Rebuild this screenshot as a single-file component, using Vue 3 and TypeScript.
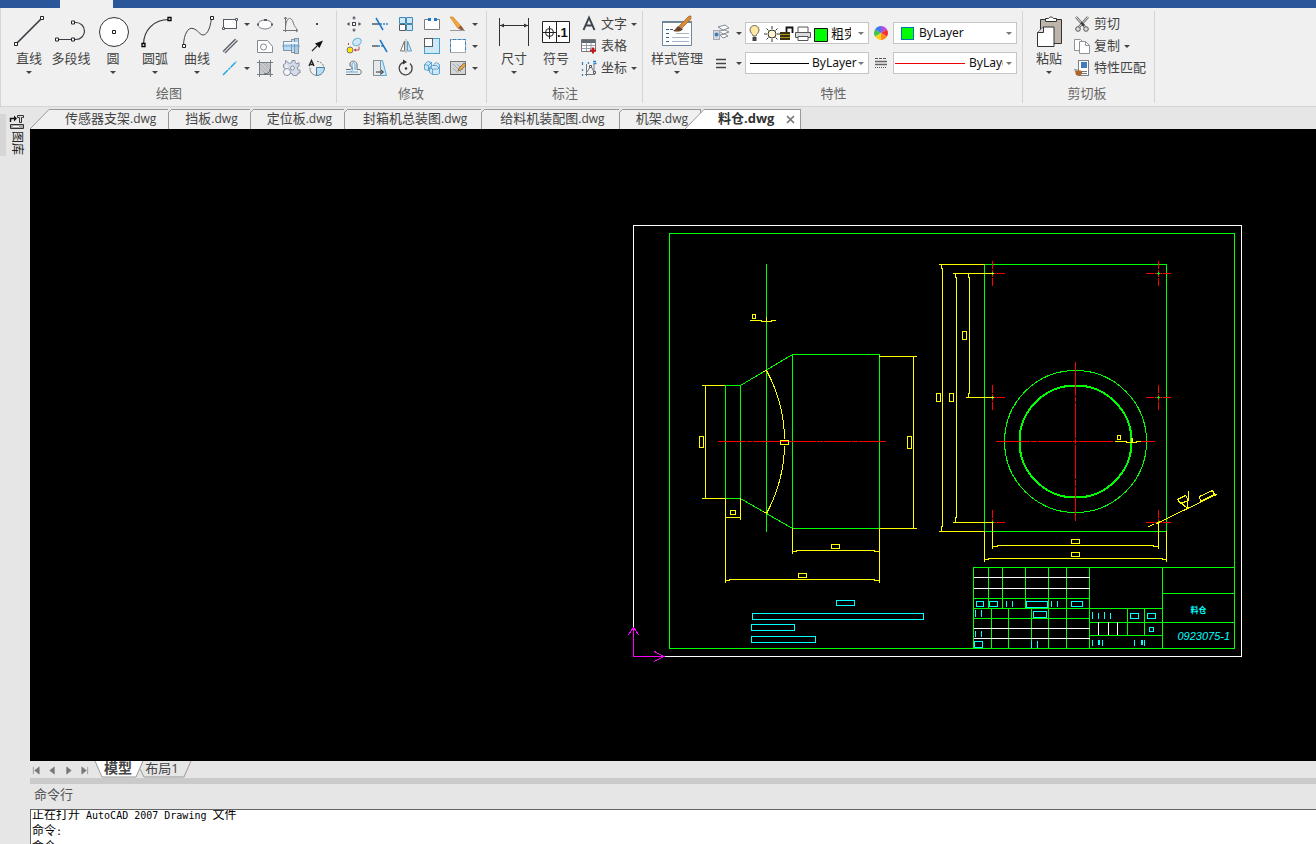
<script setup lang="ts">
import { ref } from 'vue'

interface Tool { id: string; label: string; caret?: boolean }

const g = '#555b63'
const b = '#2f86c8'
const f = '#cfe8f7'

const icons: Record<string, string> = {
  rect: `<rect x="5.500" y="6.500" width="13" height="9" fill="#fff" stroke="${g}"/><path d="M4.500 14.500h2v2h-2zM17.500 5.500h2v2h-2z" fill="#fff" stroke="${g}"/>`,
  ellipse: `<ellipse cx="12" cy="11.500" rx="7" ry="4.500" fill="#fff" stroke="#7a8087"/><path d="M11 6h3v2h-3zM4 10.500h2v2H4zM18 10.500h2v2h-2z" fill="${g}"/>`,
  spline: `<path d="M6.500 4v15M4 17.500h15M6.500 15C7 4 12 3 14 9s3 6 4 6.500M5 6l1.500-2L8 6M17 16l2 1.500-2 1.500" fill="none" stroke="#70767c"/>`,
  point: `<path d="M11 10h2v2h-2z" fill="#444"/>`,
  parallel: `<path d="M5 16.500 17.500 4M7 18 19.500 5.500" stroke="#5a6068" stroke-width="1.300"/><path d="M6 17.300 18.500 4.800" stroke="#c5c9cc"/>`,
  region: `<path d="M4.500 5.500h10l5 6v6h-15z" fill="#fff" stroke="#858b91"/><circle cx="10.500" cy="12" r="3" fill="#fff" stroke="#858b91"/>`,
  shaft: `<rect x="4.500" y="6.500" width="8" height="9" fill="#b9dcf2" stroke="#8795a3"/><rect x="12.500" y="4.500" width="3" height="13" fill="#b9dcf2" stroke="#8795a3"/><rect x="15.500" y="3.500" width="4" height="15" fill="#a9cdea" stroke="#8795a3"/><path d="M5 8h14" stroke="#eef6fb" stroke-width="2"/><path d="M3 11h18" stroke="#6fa5cf"/>`,
  arrow: `<path d="M7 16l5-5" stroke="#333" stroke-width="1.300"/><path d="M18 5.500 10 8.500l4.500 4.500z" fill="#111"/>`,
  cline: `<path d="M5 18 18.500 4.500" stroke="#27a4df" stroke-width="1.500" stroke-dasharray="7 .8 2 .8"/>`,
  hatch: `<rect x="6.500" y="5.500" width="11" height="12" fill="#c6cacd" stroke="#666c72"/><path d="M4 5.500h16M4 17.500h16M6.500 3v17M17.500 3v17" stroke="#777d83"/><path d="M7 7l10 10M7 11l6 6M10 6l7 7M13 6l4 4" stroke="#a4a9ae" stroke-width=".8"/><path d="M17 12c0 4-3 5-6 5" fill="none" stroke="#555"/>`,
  gear: `<path d="M6.500 3.500l4 3 2.500-1v-2h3v2l2 1.500 2-1.500v4l-2 1 1 2.500h2v3h-2l-1 2.500h-4l-1-2h-2M6.500 3.500v3l-2 1v3l2 1" fill="#d5dded" stroke="#8993a1"/><circle cx="8" cy="15" r="3.500" fill="#f4f6fa" stroke="#8993a1"/><circle cx="13.500" cy="11" r="2" fill="#f0f0f0" stroke="#8993a1"/>`,
  pie: `<path d="M12 4.500a7 7 0 0 1 7 6" fill="none" stroke="#777" stroke-dasharray="2 1"/><path d="M5 10.500a7 7 0 0 0 7 8" fill="none" stroke="#8a8f94"/><path d="M11.500 10.500h8c0 4-3 8-8 8z" fill="#b5e0f7" stroke="#4d7c98"/><path d="M4 9l2.500-5.500L9 9M5 7.500h3" fill="none" stroke="#222" stroke-width="1.400"/>`,
  move: `<path d="M10.500 9.500h3v3h-3z" fill="#fff" stroke="#30363c"/><path d="M12 4v3M12 15v3M5 11h3M16 11h3" stroke="#8a8f94"/><path d="M12 3 10 5.500h4zM12 19l-2-2.500h4zM5 11l2.500-2v4zM19 11l-2.500-2v4z" fill="${g}"/>`,
  trim: `<path d="M4 11h7" stroke="${g}" stroke-width="1.500"/><path d="M12 11h8" stroke="${b}" stroke-dasharray="2 1" stroke-width="1.500"/><path d="M8 5l7 12" stroke="#1f78c4" stroke-width="1.500"/>`,
  array: `<path d="M5.500 4.500h6v6h-6zM12.500 4.500h6v6h-6zM12.500 11.500h6v6h-6z" fill="${f}" stroke="#4089b5"/><path d="M5.500 11.500h6v6h-6z" fill="#fff" stroke="${g}"/>`,
  break: `<path d="M9 6.500H4.500v10h15v-10H15" fill="#fff" stroke="#777d83"/><path d="M8 5h3v3H8zM14 5h3v3h-3z" fill="#1f78c4"/>`,
  pencil: `<path d="M4 4l3 0 8 9-3 2.500z" fill="#f3a43a" stroke="#cf8526" stroke-width=".7"/><path d="M12 15l3-2.500 3 4-2 1.500z" fill="#8d5d42"/><path d="M4 17.500h15" stroke="#999"/>`,
  copy: `<ellipse cx="15" cy="7" rx="4.500" ry="3.500" transform="rotate(-35 15 7)" fill="${f}" stroke="#59a9d8"/><circle cx="8" cy="15" r="3" fill="#ffe600" stroke="#777"/><path d="M6.500 8v2M17 11.500v3.500h-3" fill="none" stroke="#b84949"/><path d="M14 13.500l-2.500 1.500 2.500 1.500z" fill="#c33"/>`,
  extend: `<path d="M4 11h6" stroke="${g}" stroke-width="1.500"/><path d="M10 11h5" stroke="${b}" stroke-dasharray="2 1" stroke-width="1.500"/><path d="M12 5l7 12" stroke="#1f78c4" stroke-width="1.500"/>`,
  mirror: `<path d="M10.500 6v10H6.500z" fill="#fff" stroke="#777"/><path d="M13.500 6v10h4z" fill="${f}" stroke="#5a9fc7"/><path d="M12 4v14" stroke="#aaa"/>`,
  scale: `<rect x="4.500" y="3.500" width="15" height="15" fill="${f}" stroke="#4b9fd0"/><rect x="4.500" y="3.500" width="8" height="8" fill="#fff" stroke="${g}"/>`,
  select: `<rect x="4.500" y="4.500" width="15" height="13" fill="#fff" stroke="#aaa"/><path d="M4.500 17V4.500h15V17" fill="none" stroke="${b}" stroke-dasharray="3 2"/>`,
  offset: `<path d="M4 17.500h13c3 0 3-5 0-5h-2V8c0-5-7-5-7-1v2c2 0 3 3 0 3.500H4" fill="none" stroke="#666d75"/><path d="M4 15h12M13 13V8c0-3-3-3-3-1v3c1 1 1 3-1 5" fill="none" stroke="#59a9d8"/>`,
  stretch: `<path d="M5.500 3.500h9l4 15h-13z" fill="${f}" stroke="#59a9d8"/><path d="M5.500 3.500h7v15h-7z" fill="#e6e9ec" stroke="#8a8f94"/><path d="M8 15h7M13 13l2.500 2-2.500 2" fill="none" stroke="#333"/>`,
  rotate: `<path d="M10 5a6.500 6.500 0 1 0 6 1.500" fill="none" stroke="#444" stroke-width="1.300"/><path d="M9 2.500v5l4-2.500z" fill="#333"/><circle cx="12" cy="11.500" r="1.200" fill="#333"/>`,
  array3d: `<path d="M4.500 7.500l3-3 4 1v5l-3 3-4-1zM4.500 7.500l4 1v5M8.500 8.500l3-3M13.500 7.500l3-2 3 2v4M9.500 10.500l3-2h4l3 3v5l-2 1h-5l-3-2zM9.500 10.500l3 1.500h5l2-1M12.500 12v5.500" fill="${f}" stroke="#4f9dcb" stroke-width=".9"/>`,
  hatchedit: `<rect x="4.500" y="4.500" width="15" height="13" fill="#d3d6d8" stroke="#777"/><path d="M7 7l8 8M7 11l5 5M11 7l6 6" stroke="#a6abb0"/><path d="M12 14l1-3 5-5 2 2-5 5z" fill="#e5a44c" stroke="#75583a" stroke-width=".7"/><path d="M4 17.500h16" stroke="#555"/>`,
  text: `<path d="M6.500 17 12 4.500 17.500 17M8.500 12.500h7" fill="none" stroke="#41464d" stroke-width="1.900"/>`,
  table: `<path d="M4.500 4.500h14v12h-14z" fill="#fff" stroke="#777"/><path d="M5 5h13v3H5z" fill="#626970"/><path d="M5 10.500h13M5 13.500h13M9.500 8v8M14 8v8" stroke="#9aa0a6"/><path d="M13 15.500h6M16 12.500v6" stroke="#c4161c" stroke-width="2"/>`,
  coord: `<path d="M8 17.500h10M9.500 7v12M10 15l4-6 3 6V7" fill="none" stroke="#737980"/><path d="M5.500 5v3M5.500 12v2M5.500 17v2M11.500 5v2M16 4.500h3M16.500 6.500h3" stroke="${b}" stroke-width="1.300"/><path d="M12.500 8.500h2v2h-2zM16.500 14.500h2v2h-2z" fill="#fff" stroke="${g}"/>`,
  layers: `<path d="M9 5l7-2 4 3-6 2zM10 9l6-1 4 2-6 2zM11 13l5-1 3 2-5 2z" fill="#fff" stroke="#858b91"/><rect x="4.500" y="8.500" width="6" height="9" fill="#d3dae1" stroke="#a5abb1"/><circle cx="7.500" cy="12.500" r="2" fill="#3c7db3"/>`,
  weight: `<path d="M7 7.500h10M7 11.500h10M7 15.500h10" stroke="#444" stroke-width="1.400"/>`,
  cut: `<path d="M6 4l9 10M18 4 9 14" stroke="#666" stroke-width="2.600"/><path d="M6 4l9 10M18 4 9 14" stroke="#eee"/><path d="M11 9.500l3 3" stroke="#333" stroke-width="2"/><circle cx="8" cy="16" r="2.300" fill="#ddd" stroke="#555"/><circle cx="16" cy="16" r="2.300" fill="#ddd" stroke="#555"/>`,
  copydoc: `<path d="M4.500 4.500h6l3 3v8h-9z" fill="#fff" stroke="#8f9398"/><path d="M9.500 6.500h6l4 4v8h-10z" fill="#fff" stroke="#8f9398"/><path d="M15.500 6.500v4h4" fill="none" stroke="#8f9398"/>`,
  match: `<rect x="8.500" y="3.500" width="10" height="15" fill="#fff" stroke="#7b7f84"/><rect x="11" y="5" width="6" height="6" fill="#3f7dba"/><path d="M12 14.500h5M12 16.500h5" stroke="#777"/><path d="M5 14l3-1 4 1 0 3-3 2-3-1z" fill="#b06329"/><path d="M4 12.500l4 1" stroke="#999" stroke-width="1.500"/>`,
}

const bigIcons: Record<string, string> = {
  line: `<path d="M3 29 29 3" stroke="#3a3f46" stroke-width="1.700"/><path d="M1.500 27.500h3v3h-3zM27.500 1.500h3v3h-3z" fill="#fff" stroke="#222"/>`,
  pline: `<path d="M2 24.500h16M18 7.500h3a8.500 8.500 0 0 1 0 17h-3" fill="none" stroke="#3a3f46" stroke-width="1.200"/><path d="M.5 23h3v3h-3zM16.500 23h3v3h-3zM16.500 6h3v3h-3z" fill="#fff" stroke="#222"/>`,
  circle: `<circle cx="17" cy="17" r="14.500" fill="#fff" stroke="#333"/><path d="M15.500 15.500h3v3h-3z" fill="#fff" stroke="#222"/>`,
  arc: `<path d="M4.500 29.500C4.500 15 15 4.500 30 4.500" fill="none" stroke="#333" stroke-width="1.200"/><path d="M3 28.500h3v3H3zM29 2.500h3v3h-3z" fill="#fff" stroke="#000" stroke-width="1.300"/>`,
  curve: `<path d="M2.500 30C3 19 7 12 12 13.500S19 20 22 20s7-4 8.500-17" fill="none" stroke="#444"/><path d="M1.500 29.500h3v3h-3zM29.500 1.500h3v3h-3z" fill="#fff" stroke="#222"/>`,
  dim: `<path d="M1.500 3v28M30.500 3v28" stroke="#333"/><path d="M2 10.500h28" stroke="#333"/><path d="M2 10.500l4-2v4zM30 10.500l-4-2v4z" fill="#333"/>`,
  symbol: `<path d="M2.500 6.500h27v21h-27zM16.500 6.500v21" fill="#fff" stroke="#222"/><circle cx="9.500" cy="17.500" r="4" fill="none" stroke="#222"/><path d="M3 17.500h13M9.500 11v13" stroke="#222"/><text x="17" y="22" font-size="13" font-weight="700" font-family="Liberation Sans, sans-serif" fill="#111">.1</text>`,
  style: `<path d="M1.500 6.500h29v24h-29z" fill="#fff" stroke="#6d879d"/><path d="M1 6h30v2H1z" fill="#6d879d"/><path d="M5 14.500h8M5 18.500h4M5 22.500h4M5 26.500h4" stroke="#355d87" stroke-dasharray="3 1"/><path d="M15 18.500h13M11 22.500h17M11 26.500h17" stroke="#a7b7c9"/><path d="M18 11 28 1l2 0v3L21 13z" fill="#d98a35" stroke="#8c5524" stroke-width=".6"/><path d="M17 11l5 3c-2 3-6 3-10 2 2-1 3-3 5-5z" fill="#6a442b"/>`,
  paste: `<path d="M7.500 4.500h21v24h-21z" fill="#bdb5aa" stroke="#333"/><path d="M12.500 6.500v-3h3c1-2 4-2 5 0h3v3z" fill="#fff" stroke="#333"/><path d="M4.500 17.500l6-5.500H21v19.500H4.500z" fill="#fff" stroke="#333"/><path d="M10.500 12v5.500h-6" fill="#ddd" stroke="#333"/>`,
}

const drawBig: Tool[] = [
  { id: 'line', label: '直线', caret: true },
  { id: 'pline', label: '多段线' },
  { id: 'circle', label: '圆', caret: true },
  { id: 'arc', label: '圆弧', caret: true },
  { id: 'curve', label: '曲线', caret: true },
]
const drawSmall: Tool[] = [
  { id: 'rect', label: '矩形', caret: true }, { id: 'ellipse', label: '椭圆' }, { id: 'spline', label: '公式曲线' }, { id: 'point', label: '点' },
  { id: 'parallel', label: '平行线' }, { id: 'region', label: '局部放大' }, { id: 'shaft', label: '孔轴' }, { id: 'arrow', label: '箭头' },
  { id: 'cline', label: '中心线', caret: true }, { id: 'hatch', label: '剖面线' }, { id: 'gear', label: '齿形' }, { id: 'pie', label: '圆弧拟合' },
]
const editSmall: Tool[] = [
  { id: 'move', label: '平移' }, { id: 'trim', label: '裁剪' }, { id: 'array', label: '阵列' }, { id: 'break', label: '打断' }, { id: 'pencil', label: '删除', caret: true },
  { id: 'copy', label: '平移复制' }, { id: 'extend', label: '延伸' }, { id: 'mirror', label: '镜像' }, { id: 'scale', label: '缩放' }, { id: 'select', label: '分解', caret: true },
  { id: 'offset', label: '等距线' }, { id: 'stretch', label: '拉伸' }, { id: 'rotate', label: '旋转' }, { id: 'array3d', label: '三维旋转' }, { id: 'hatchedit', label: '填充编辑', caret: true },
]
const noteBig: Tool[] = [
  { id: 'dim', label: '尺寸', caret: true },
  { id: 'symbol', label: '符号', caret: true },
]
const noteRows: Tool[] = [
  { id: 'text', label: '文字', caret: true },
  { id: 'table', label: '表格' },
  { id: 'coord', label: '坐标', caret: true },
]
const clipRows: Tool[] = [
  { id: 'cut', label: '剪切' },
  { id: 'copydoc', label: '复制', caret: true },
  { id: 'match', label: '特性匹配' },
]

const files = ['传感器支架', '挡板', '定位板', '封箱机总装图', '给料机装配图', '机架']
const active = ref('料仓.dwg')

const navs = [
  { label: '第一页', d: 'M1.500 1v8M8 1v8L3 5z' },
  { label: '上一页', d: 'M7 1v8L2 5z' },
  { label: '下一页', d: 'M3 1v8l5-4z' },
  { label: '最后一页', d: 'M2 1v8l5-4zM8.500 1v8' },
]

const holes = [[992, 273], [1158, 273], [992, 397], [1158, 397], [992, 522], [1158, 522]]

type Box = [number, number, number, number]
const dimBoxes: Box[] = [
  [752, 314, 3, 4], [699, 436, 4, 11], [907, 436, 4, 12], [730, 510, 5, 4], [798, 573, 8, 4], [831, 544, 8, 4], [780, 440, 8, 4],
  [936, 393, 4, 8], [949, 393, 4, 8], [962, 331, 4, 8], [1071, 539, 8, 4], [1071, 552, 8, 4], [1117, 435, 3, 4],
]
const textBoxes: Box[] = [
  [836, 600, 18, 5], [752, 613, 171, 6], [751, 624, 43, 6], [751, 636, 64, 6],
  [976, 601, 7, 5], [989, 601, 8, 5], [1026, 601, 21, 6], [1071, 601, 11, 5], [1033, 611, 13, 6],
  [1130, 613, 8, 5], [1147, 613, 8, 5], [1149, 627, 4, 4], [974, 641, 8, 6],
]
</script>

<template>
  <div class="app">
    <div class="titlebar"><span class="menu-tab"></span></div>

    <header class="ribbon">
      <section class="group">
        <div class="tools">
          <button v-for="t in drawBig" :key="t.id" class="big">
            <svg width="33" height="33" viewBox="0 0 33 33" aria-hidden="true" v-html="bigIcons[t.id]"></svg>
            <span>{{ t.label }}</span>
            <i v-if="t.caret" class="caret"></i>
          </button>
          <div class="grid draw">
            <button v-for="t in drawSmall" :key="t.id" class="small" :aria-label="t.label">
              <svg width="24" height="22" viewBox="0 0 24 22" aria-hidden="true" v-html="icons[t.id]"></svg>
              <i v-if="t.caret" class="caret"></i>
            </button>
          </div>
        </div>
        <h2>绘图</h2>
      </section>

      <section class="group edit">
        <div class="tools">
          <div class="grid modify">
            <button v-for="t in editSmall" :key="t.id" class="small" :aria-label="t.label">
              <svg width="24" height="22" viewBox="0 0 24 22" aria-hidden="true" v-html="icons[t.id]"></svg>
              <i v-if="t.caret" class="caret"></i>
            </button>
          </div>
        </div>
        <h2>修改</h2>
      </section>

      <section class="group note">
        <div class="tools">
          <button v-for="t in noteBig" :key="t.id" class="big">
            <svg width="33" height="33" viewBox="0 0 33 33" aria-hidden="true" v-html="bigIcons[t.id]"></svg>
            <span>{{ t.label }}</span>
            <i class="caret"></i>
          </button>
          <div class="rows">
            <button v-for="t in noteRows" :key="t.id" class="row">
              <svg width="24" height="22" viewBox="0 0 24 22" aria-hidden="true" v-html="icons[t.id]"></svg>
              <span>{{ t.label }}</span>
              <i v-if="t.caret" class="caret"></i>
            </button>
          </div>
        </div>
        <h2>标注</h2>
      </section>

      <section class="group props">
        <div class="tools">
          <button class="big wide">
            <svg width="33" height="33" viewBox="0 0 33 33" aria-hidden="true" v-html="bigIcons.style"></svg>
            <span>样式管理</span>
            <i class="caret"></i>
          </button>
          <div class="fields">
            <button class="small pick" aria-label="图层">
              <svg width="24" height="22" viewBox="0 0 24 22" aria-hidden="true" v-html="icons.layers"></svg><i class="caret"></i>
            </button>
            <div class="combo">
              <svg class="layer-state" width="82" height="19" viewBox="0 0 82 19" aria-hidden="true">
                <path d="M6 12c0-2-3-3-3-6a4.500 4.500 0 0 1 9 0c0 3-3 4-3 6z" fill="#ffe9a0" stroke="#666" /><path d="M5.500 13h4v4h-4z" fill="#444" />
                <circle cx="25" cy="10" r="4" fill="#fff6cf" stroke="#333" />
                <path d="M25 2v3M25 15v3M17 10h3M30 10h3M19.500 4.500l2 2M28.500 13.500l2 2M30.500 4.500l-2 2M21.500 13.500l-2 2" stroke="#333" />
                <path d="M39.500 9V3.500h6V9" fill="none" stroke="#111" stroke-width="1.800" /><path d="M33 8h10v8H33z" fill="#a8931a" /><path d="M33 9h10M33 12h10M33 15h10" stroke="#111" stroke-width="1.500" />
                <path d="M51 8V3h10v5" fill="#fff" stroke="#555" /><path d="M48.500 8.500h15v5h-15z" fill="#d9dde0" stroke="#555" /><path d="M51 12.500h10v4H51z" fill="#fff" stroke="#555" />
                <path d="M67.500 4.500h13v13h-13z" fill="#0f0" stroke="#111" />
              </svg>
              <select aria-label="当前图层" class="clip-layer"><option>粗实线层</option></select><i class="caret"></i>
            </div>
            <svg class="mid" width="24" height="20" viewBox="0 0 24 20" aria-hidden="true">
              <path d="M12 10V3a7 7 0 0 1 6 3.500z" fill="#b04ee0" /><path d="M12 10l6-3.500a7 7 0 0 1 0 7z" fill="#f33030" /><path d="M12 10l6 3.500A7 7 0 0 1 12 17z" fill="#ff8b1e" />
              <path d="M12 10v7a7 7 0 0 1-6-3.500z" fill="#ffd21e" /><path d="M12 10l-6 3.500a7 7 0 0 1 0-7z" fill="#43c643" /><path d="M12 10 6 6.500A7 7 0 0 1 12 3z" fill="#3d7cf0" />
            </svg>
            <div class="combo">
              <i class="swatch"></i>
              <select aria-label="颜色"><option>ByLayer</option></select><i class="caret"></i>
            </div>

            <button class="small pick" aria-label="线宽设置">
              <svg width="24" height="22" viewBox="0 0 24 22" aria-hidden="true" v-html="icons.weight"></svg><i class="caret"></i>
            </button>
            <div class="combo">
              <i class="sample"></i>
              <select aria-label="线宽"><option>ByLayer</option></select><i class="caret"></i>
            </div>
            <svg class="mid" width="24" height="20" viewBox="0 0 24 20" aria-hidden="true">
              <path d="M6 5.500h12" stroke="#555" stroke-dasharray="3 1" /><path d="M6 8.500h12M6 11.500h12" stroke="#666" stroke-width="1.500" /><path d="M6 14.500h12" stroke="#555" stroke-dasharray="1 1" />
            </svg>
            <div class="combo">
              <i class="sample red"></i>
              <select aria-label="线型" class="clip-type"><option>ByLayer</option></select><i class="caret"></i>
            </div>
          </div>
        </div>
        <h2>特性</h2>
      </section>

      <section class="group clipboard">
        <div class="tools">
          <button class="big">
            <svg width="33" height="33" viewBox="0 0 33 33" aria-hidden="true" v-html="bigIcons.paste"></svg>
            <span>粘贴</span>
            <i class="caret"></i>
          </button>
          <div class="rows">
            <button v-for="t in clipRows" :key="t.id" class="row">
              <svg width="24" height="22" viewBox="0 0 24 22" aria-hidden="true" v-html="icons[t.id]"></svg>
              <span>{{ t.label }}</span>
              <i v-if="t.caret" class="caret"></i>
            </button>
          </div>
        </div>
        <h2>剪切板</h2>
      </section>
    </header>

    <div class="body">
      <aside class="side">
        <i class="grip"></i>
        <button class="library">
          <svg width="16" height="17" viewBox="0 0 16 17" aria-hidden="true">
            <path d="M1.500 8V4.500H6" fill="none" stroke="#111" stroke-width="1.400" /><path d="M5 1.500v6l3-3z" fill="#111" />
            <path d="M8.500 1.500h6v2h-2v5h-2v-5h-2z" fill="#ddd" stroke="#333" />
            <path d="M1.500 10.500h13v4h-13z" fill="#aaa" stroke="#333" /><path d="M4 12.500h6" stroke="#fff" />
          </svg>
          <span>图库</span>
        </button>
      </aside>

      <main class="work">
        <nav class="files">
          <button v-for="(name, i) in files" :key="name" class="file" :class="{ first: i === 0, long: name.length > 5 }">
            <svg v-if="i === 0" class="slant" width="20" height="20" viewBox="0 0 20 20" aria-hidden="true">
              <path d="M0 20 19 .5h1V20z" fill="#f0f0f0" /><path d="M0 20 19 .5h1" fill="none" stroke="#999" />
            </svg>
            <svg v-else class="notch" width="4" height="4" viewBox="0 0 4 4" aria-hidden="true">
              <path d="M0 0h4L0 4z" fill="#e6e6e6" /><path d="M0 4 4 0" stroke="#999" />
            </svg>
            <span>{{ name }}<small>.dwg</small></span>
          </button>
          <div class="file active">
            <svg class="slant" width="20" height="20" viewBox="0 0 20 20" aria-hidden="true">
              <path d="M0 20 19 .5h1V20z" fill="#fff" /><path d="M0 20 19 .5h1" fill="none" stroke="#999" />
            </svg>
            <button class="name">{{ active }}</button>
            <button class="close" aria-label="关闭">
              <svg width="9" height="9" viewBox="0 0 9 9" aria-hidden="true"><path d="M1 1l7 7M8 1 1 8" stroke="#777" stroke-width="1.700" /></svg>
            </button>
          </div>
        </nav>

        <div class="canvas">
          <svg class="drawing" width="1286" height="632" viewBox="29.500 128.500 1286 632" role="img" aria-label="料仓 0923075-1">
            <g class="ink white">
              <path d="M633 225H1241V656H633z" />
            </g>
            <g class="ink green">
              <path d="M669 233H1234V648H669z" />
              <path d="M766 264V531M725 385H740V498H725zM740 385 792 354M740 498 792 528M792 354H879V528H792z" />
              <path d="M984 264H1166V531H984z" />
              <circle cx="1075" cy="441" r="71" />
              <circle cx="1075" cy="441" r="56" class="bold" />
            </g>
            <g class="ink red">
              <path d="M718 441h27M747 441h4M753 441h62M817 441h5M824 441h26M852 441h5M859 441h26" />
              <path d="M996 441h33M1031 441h5M1038 441h33M1073 441h4M1079 441h33M1136 441h18" />
              <path d="M1075 362v33M1075 397v4M1075 403v34M1075 439v4M1075 445v33M1075 480v5M1075 487v33" />
              <path v-for="h in holes" :key="h.join()" :d="`M${h[0] - 12} ${h[1]}h7m2 0h6m2 0h7M${h[0]} ${h[1] - 12}v7m0 2v6m0 2v7`" />
            </g>
            <g class="ink green">
              <path v-for="h in holes" :key="h.join()" :d="`M${h[0] - 1} ${h[1]}h2M${h[0]} ${h[1] - 1}v2`" />
            </g>
            <g class="ink yellow">
              <path d="M750 320h11v1h10v-1h4M766 317v3" />
              <path d="M702 385h22M702 498h23M705 385v113M725 498v84M740 498v21M725 517h15" />
              <path d="M725 580h4v-1h145v1h5M879 528v54M792 528v25M792 551h4v-1h78v1h5" />
              <path d="M879 356h37M879 528h37M913 356v172" />
              <path d="M763 371l3-1A149 149 0 0 1 784 438M784 446A149 149 0 0 1 766 513l-3-2" />
              <path d="M939 264h45M939 531h45M941 264v4h1v258h-1v5" />
              <path d="M953 273h40M953 522h39M955 273v4h1v240h-1v5M968 273v4h1v116h-1v4M966 397h27" />
              <path d="M992 522v26M1158 522v26M992 546h5v-1h156v1h5" />
              <path d="M984 531v30M1166 531v30M984 559h4v-1h174v1h4" />
              <path d="M1115 441h11v1h10v-1h4M1131 438v3M1132 438v3" />
              <path d="M1148 526l5-2M1156 523 1216 494M1199 496l13-6 2 4-14 7zM1177 499l8-4 3 5-8 3zM1178 500l9 8M1188 491l-1 17" />
              <rect v-for="r in dimBoxes" :key="r.join()" :x="r[0]" :y="r[1]" :width="r[2]" :height="r[3]" />
            </g>
            <g class="ink green">
              <path d="M973 567H1234M973 567V648M988 567V608M1002 567V608M1025 567V608M1048 567V648M1066 567V648M1089 567V648M1162 567V648" />
              <path d="M973 598H1089M973 608H1162M973 618H1089M991 608V648M1008 608V648M1031 608V648" />
              <path d="M1089 622H1234M1089 635H1162M1162 593H1234M1127 608V635M1144 608V635" />
            </g>
            <g class="ink white">
              <path d="M974 577H1089M974 588H1089M974 628H1089M974 638H1089M1098 622v12M1108 622v12M1117 622v12" />
            </g>
            <g class="ink cyan">
              <rect v-for="r in textBoxes" :key="r.join()" :x="r[0]" :y="r[1]" :width="r[2]" :height="r[3]" />
              <path d="M1006 601v5M1012 601v5M1051 601v5M1057 601v5M975 610v6M981 610v6M975 631v5M981 631v5M1031 641v6M1037 641v6" />
              <path d="M1092 612v6M1098 613v5M1104 612v6M1110 613v5M1092 640v5M1098 640v4M1099 640v4M1102 640v5M1134 640v5M1141 640v4M1142 640v4M1144 640v5" />
            </g>
            <g class="ink magenta">
              <path d="M633 656V627M628 634l5-7 5 7M633 656h30M654 651l9 5-9 5" />
            </g>
            <text x="1190" y="612" class="part">料仓</text>
            <text x="1177" y="639" class="number">0923075-1</text>
          </svg>
        </div>

        <div class="sheets">
          <button v-for="n in navs" :key="n.label" class="nav" :aria-label="n.label">
            <svg width="9" height="9" viewBox="0 0 10 10" aria-hidden="true"><path :d="n.d" fill="#777" stroke="#777" stroke-width=".7" /></svg>
          </button>
          <button class="sheet current">
            <svg width="50" height="17" viewBox="0 0 50 17" aria-hidden="true"><path d="M1 0 8 16H42L49 0z" fill="#fff" /><path d="M1 0 8 16H42L49 0" fill="none" stroke="#999" /></svg>
            <span>模型</span>
          </button>
          <button class="sheet">
            <svg width="54" height="17" viewBox="0 0 54 17" aria-hidden="true"><path d="M2 8 6 16H46L53 0" fill="none" stroke="#999" /></svg>
            <span>布局1</span>
          </button>
        </div>
        <div class="splitter"></div>
        <h3>命令行</h3>
        <div class="log" role="log">
          <p>正在打开<code> AutoCAD 2007 Drawing </code>文件</p>
          <p>命令<code>:</code></p>
          <p>命令<code>:</code></p>
        </div>
      </main>
    </div>
  </div>
</template>

<style>
html, body { margin: 0; }
</style>

<style scoped>
.app {
  display: flex;
  flex-direction: column;
  height: 100vh;
  overflow: hidden;
  background: #e6e6e6;
  color: #444;
  font: 13px/18px "Open Sans", "Noto Sans CJK SC", sans-serif;
}
button { margin: 0; padding: 0; border: 0; background: none; color: inherit; font: inherit; white-space: nowrap; }
svg { display: block; flex: none; }
h2, h3, p { margin: 0; font-weight: 400; }

.titlebar { flex: none; display: flex; height: 8px; padding-left: 60px; background: #2b579a; }
.menu-tab { width: 53px; background: #f0f0f0; }

.ribbon { flex: none; display: flex; height: 98px; background: #f0f0f0; border: solid #d4d4d4; border-width: 0 0 1px 1px; }
.group { display: flex; flex-direction: column; margin: 3px 0; padding: 2px 6px 0 7px; border-right: 1px solid #d4d4d4; }
.group h2 { color: #666; text-align: center; font-size: 13px; line-height: 18px; }
.tools { display: flex; height: 71px; }
.edit { padding: 2px 5px 0 4px; }
.note { padding: 2px 5px 0 6px; }
.props { padding: 2px 5px 0 7px; }
.clipboard { padding: 2px 8px 0 5px; }

.caret { flex: none; width: 0; height: 0; border: solid transparent; border-width: 3px 3px 0; border-top-color: #444; }
.big { display: flex; flex-direction: column; align-items: center; width: 42px; padding-top: 2px; }
.big span { line-height: 20px; }
.big .caret { margin-top: 3px; }
.wide { width: 54px; }

.grid { display: grid; grid-auto-rows: 22px; }
.draw { grid-template-columns: 34px 26px 26px 26px; }
.modify { grid-template-columns: repeat(4, 26px) 36px; }
.small { display: flex; align-items: center; justify-content: flex-start; }
.modify .small, .draw .small:not(:nth-child(4n + 1)) { padding-left: 1px; }
.small .caret { margin-left: 2px; }
.rows { display: flex; flex-direction: column; }
.row { display: flex; align-items: center; height: 22px; }
.row span { line-height: 20px; padding-bottom: 2px; }
.row .caret { margin-left: 4px; }

.fields { display: grid; grid-template-columns: 36px 124px 24px 124px; grid-auto-rows: 22px; row-gap: 8px; align-items: center; align-content: start; padding: 9px 0 0 5px; }
.pick { margin-right: 4px; }
.pick .caret { margin-left: 3px; }
.combo { display: flex; align-items: center; box-sizing: border-box; height: 22px; padding-right: 4px; border: 1px solid #c6c6c6; background: #fff; color: #111; min-width: 0; }
.combo select { flex: 1; min-width: 0; height: 18px; margin: 0; padding: 0; border: 0; outline: 0; appearance: none; background: none; color: #111; font: 12px/18px "Noto Sans", "Noto Sans CJK SC", sans-serif; }
.combo .caret { border-top-color: #777; }
.layer-state { margin: 0 2px 0 1px; }
.combo .clip-layer { flex: none; width: 20px; margin-right: auto; font-size: 13px; }
.swatch { box-sizing: border-box; width: 13px; height: 13px; margin: 0 5px 0 7px; border: 1px solid #0a6fb8; background: #0f0; }
.sample { flex: none; width: 59px; height: 1px; margin: 0 3px 0 4px; background: #000; }
.sample.red { width: 70px; margin: 0 4px 0 1px; background: #e00; }
.combo .clip-type { flex: none; width: 34px; margin-right: auto; }

.body { flex: 1; display: flex; min-height: 0; }
.side { flex: none; display: flex; width: 30px; padding-top: 7px; }
.grip { width: 6px; height: 42px; margin-right: 3px; background: #d6d6d6; }
.library { display: flex; flex-direction: column; align-items: center; align-self: flex-start; width: 16px; }
.library span { writing-mode: vertical-rl; text-orientation: sideways; font-size: 12px; line-height: 14px; color: #222; }
.work { flex: 1; display: flex; flex-direction: column; min-width: 0; }

.files { flex: none; display: flex; align-items: flex-end; height: 22px; }
.file { position: relative; box-sizing: border-box; display: flex; align-items: center; height: 20px; padding: 0 12px 2px 16px; border: solid #999; border-width: 1px 1px 0 0; background: #f0f0f0; line-height: 17px; }
.file small { font-size: 12px; }
.file.long { padding-left: 18px; padding-right: 14px; }
.file.first { padding-left: 35px; border-top-color: transparent; background: linear-gradient(#999, #999) 20px 0 / 100% 1px no-repeat border-box, linear-gradient(#f0f0f0, #f0f0f0) 20px 0 / 100% 100% no-repeat; }
.slant { position: absolute; left: 0; top: -1px; }
.notch { position: absolute; left: -1px; top: -1px; }
.file.active { margin-left: -16px; padding: 0 5px 2px 33px; border-top-color: transparent; background: linear-gradient(#999, #999) 20px 0 / 100% 1px no-repeat border-box, linear-gradient(#fff, #fff) 20px 0 / 100% 100% no-repeat; color: #333; }
.name { font-weight: 700; }
.close { margin-left: 12px; padding-top: 2px; }

.canvas { flex: 1; min-height: 0; overflow: hidden; background: #000; }
.ink { fill: none; stroke-width: 1; stroke-linecap: square; shape-rendering: crispEdges; }
.white { stroke: #fff; }
.green { stroke: #0f0; }
.red { stroke: #f00; }
.yellow { stroke: #ff0; }
.cyan { stroke: #0ff; }
.magenta { stroke: #f0f; }
.bold { stroke-width: 2; }
.part { fill: #0ff; font: 700 8px "Noto Sans CJK SC", sans-serif; }
.number { fill: #0ff; font: italic 11px "Liberation Sans", sans-serif; }

.sheets { flex: none; display: flex; height: 17px; }
.nav { display: flex; align-items: center; justify-content: flex-start; box-sizing: border-box; width: 16px; margin-top: 1px; padding-left: 2px; }
.sheet { position: relative; display: flex; align-items: center; justify-content: center; width: 48px; }
.sheet svg { position: absolute; left: 0; top: 0; }
.sheet span { position: relative; line-height: 14px; padding-bottom: 3px; }
.current { z-index: 1; width: 44px; padding-left: 4px; font-size: 14px; font-weight: 700; }
.splitter { flex: none; height: 6px; background: #cacaca; }
h3 { flex: none; height: 25px; padding-left: 4px; color: #555; font-size: 13px; line-height: 21px; }
.log { flex: none; box-sizing: border-box; height: 35px; overflow: hidden; border: solid #646464; border-width: 1px 0 0 1px; background: #fff; color: #000; font: 12px/16px "Noto Sans CJK SC", sans-serif; }
.log p { height: 16px; padding-left: 1px; white-space: pre; }
.log p:first-child { margin-top: -4px; }
code { font: 10px/16px "DejaVu Sans Mono", monospace; }
</style>
